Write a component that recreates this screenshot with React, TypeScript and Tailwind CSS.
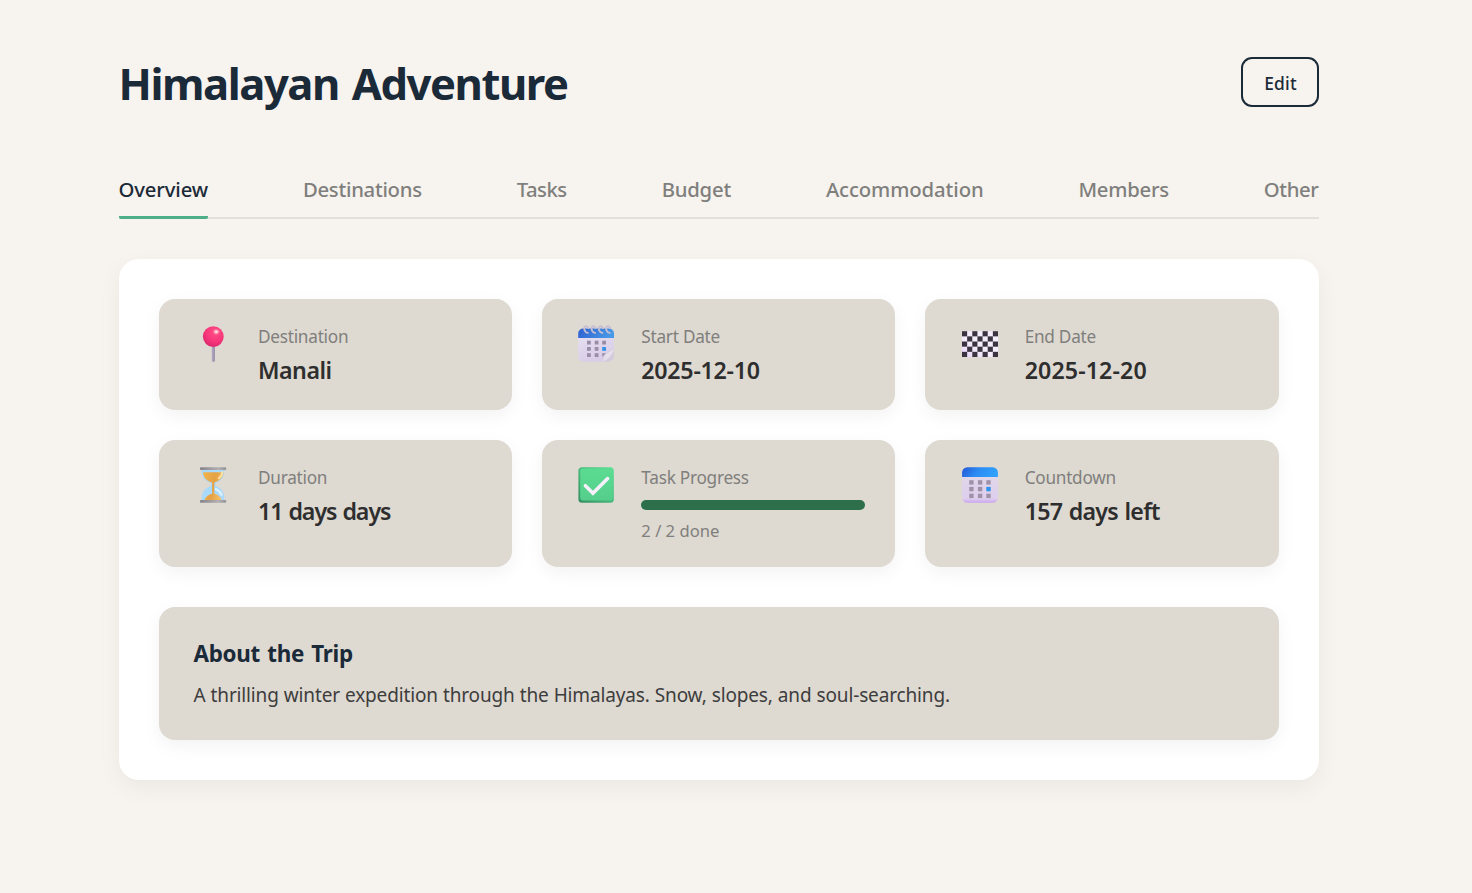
import type { ReactNode } from "react";

function PinIcon() {
  return (
    <svg className="size-9 shrink-0 overflow-visible" viewBox="0 0 36 36">
      <defs>
        <radialGradient id="pinBall" cx="0.6" cy="0.3" r="0.75">
          <stop offset="0" stopColor="#ff4d86" />
          <stop offset="0.55" stopColor="#f9387b" />
          <stop offset="1" stopColor="#d9246c" />
        </radialGradient>
        <linearGradient id="pinStick" x1="0" x2="1" y1="0" y2="0">
          <stop offset="0" stopColor="#b5adc6" />
          <stop offset="1" stopColor="#938aa5" />
        </linearGradient>
        <radialGradient id="pinShine">
          <stop offset="0" stopColor="#ffe9ea" />
          <stop offset="0.3" stopColor="#ffc9d3" />
          <stop offset="1" stopColor="#ff7d9c" stopOpacity="0" />
        </radialGradient>
      </defs>
      <rect x="16.8" y="19" width="3.1" height="16.8" rx="0.8" fill="url(#pinStick)" />
      <circle cx="18.3" cy="10.6" r="10.4" fill="url(#pinBall)" />
      <ellipse cx="21.3" cy="5.8" rx="4" ry="3.4" fill="url(#pinShine)" />
    </svg>
  );
}

function SpiralCalendarIcon() {
  return (
    <svg className="size-9 shrink-0 overflow-visible" viewBox="0 0 36 36">
      <defs>
        <linearGradient id="spiralTop" x1="0" x2="1" y1="0" y2="0.2">
          <stop offset="0" stopColor="#2f5fd0" />
          <stop offset="1" stopColor="#4799e6" />
        </linearGradient>
        <linearGradient id="spiralBody" x1="0" x2="0.5" y1="0" y2="1">
          <stop offset="0" stopColor="#e6dff0" />
          <stop offset="1" stopColor="#d8cce6" />
        </linearGradient>
      </defs>
      <path d="M0.2 10H36V24.5L25.5 35.8H5.5a5.3 5.3 0 0 1-5.3-5.3Z" fill="url(#spiralBody)" />
      <path d="M0.2 12V7.5A5 5 0 0 1 5.2 2.5H31a5 5 0 0 1 5 5V12Z" fill="url(#spiralTop)" />
      <g fill="#9a8da7">
        <rect x="9" y="14.7" width="3.8" height="3.8" />
        <rect x="16.7" y="14.7" width="3.8" height="3.8" />
        <rect x="24.2" y="14.7" width="3.8" height="3.8" />
        <rect x="9" y="21" width="3.8" height="3.8" />
        <rect x="16.7" y="21" width="3.8" height="3.8" />
        <rect x="9" y="27.2" width="3.8" height="3.8" />
        <rect x="16.7" y="27.2" width="3.8" height="3.8" />
        <path d="M24.2 27.2h3.8l-3.8 3.8z" />
      </g>
      <rect x="24.2" y="21" width="3.8" height="3.8" fill="#3493e6" />
      <path d="M36 22.5C32.5 26.3 29.5 26 27 28.2C25 30.6 26.4 33.5 24.2 35.8H30a6 6 0 0 0 6-6Z" fill="#d3cbdb" />
      <path d="M36 22.5C33 26 29.5 26.2 27.4 28.8C25.8 31 26.4 33.7 24.2 35.8C29 34.5 35 28.5 36 22.5Z" fill="#e6e0ea" />
      <g fill="none" stroke="#c6bfd3" strokeWidth="1.9" strokeLinecap="round">
        <path d="M9.8 6.9C6.8 6.7 5.2 2.5 6.8 0.7C8-0.3 9.4 0.2 10.4 2" />
        <path d="M17.1 6.9C14.1 6.7 12.5 2.5 14.1 0.7C15.3-0.3 16.7 0.2 17.7 2" />
        <path d="M24.4 6.9C21.4 6.7 19.8 2.5 21.4 0.7C22.6-0.3 24 0.2 25 2" />
        <path d="M31.7 6.9C28.7 6.7 27.1 2.5 28.7 0.7C29.9-0.3 31.3 0.2 32.3 2" />
      </g>
    </svg>
  );
}

function FlagIcon() {
  const cells = Array.from({ length: 35 }, (_, i) => i).filter((i) => i % 2 === 0);
  return (
    <svg className="size-9 shrink-0 overflow-visible" viewBox="0 0 36 36">
      <defs>
        <linearGradient id="flagLight" x1="0" x2="1" y1="1" y2="0">
          <stop offset="0" stopColor="#e9d6fa" />
          <stop offset="0.4" stopColor="#f4edfb" />
          <stop offset="1" stopColor="#f5eefb" />
        </linearGradient>
      </defs>
      <rect x="0" y="5.2" width="36" height="25.8" fill="url(#flagLight)" />
      {cells.map((i) => (
        <rect
          key={i}
          x={(i % 7) * 5.143}
          y={5.2 + Math.floor(i / 7) * 5.16}
          width="5.143"
          height="5.16"
          fill="#3b3440"
        />
      ))}
    </svg>
  );
}

function HourglassIcon() {
  return (
    <svg className="size-9 shrink-0 overflow-visible" viewBox="0 0 36 36">
      <defs>
        <linearGradient id="hgCap" x1="0" x2="1" y1="0" y2="0">
          <stop offset="0" stopColor="#85838a" />
          <stop offset="0.7" stopColor="#b1afb2" />
          <stop offset="1" stopColor="#939297" />
        </linearGradient>
        <linearGradient id="hgSand" x1="0" x2="1" y1="0" y2="0.3">
          <stop offset="0" stopColor="#f2b54d" />
          <stop offset="0.6" stopColor="#e5a146" />
          <stop offset="1" stopColor="#f5bd62" />
        </linearGradient>
      </defs>
      <path d="M6.7 2.5H29.3C29.6 10 26.2 13.7 20.6 16V19C26.5 21.2 29.7 25 29.3 33.5H6.7C6.3 25 9.5 21.2 15.9 19V16C9.8 13.7 6.4 10 6.7 2.5Z" fill="#a9d9fb" />
      <path d="M8 6.2Q8 5.2 9 5.2H27.5Q28.6 5.2 28.4 6.4C27.3 11.5 23.5 14.2 19.3 15.5V26.8C22 27.5 25.6 29.4 26.6 33H9.7C10.7 29.4 14.2 27.5 17.1 26.8V15.5C12.3 14.2 8.8 11 8 6.2Z" fill="url(#hgSand)" />
      <path d="M24 11.2Q27 9 27.3 5" fill="none" stroke="#ffe0a1" strokeWidth="2.1" strokeLinecap="round" />
      <path d="M20.9 22Q25 24 26.6 27.8" fill="none" stroke="#dcf2ff" strokeWidth="2.2" strokeLinecap="round" />
      <rect x="5" y="0.2" width="26.2" height="2.9" rx="0.8" fill="url(#hgCap)" />
      <rect x="5" y="33" width="26.2" height="2.8" rx="0.8" fill="url(#hgCap)" />
    </svg>
  );
}

function CheckIcon() {
  return (
    <svg className="size-9 shrink-0 overflow-visible" viewBox="0 0 36 36">
      <defs>
        <linearGradient id="checkEdge" x1="0" x2="1" y1="1" y2="0">
          <stop offset="0" stopColor="#358e62" />
          <stop offset="0.5" stopColor="#47b97c" />
          <stop offset="1" stopColor="#5be294" />
        </linearGradient>
        <linearGradient id="checkFace" x1="0" x2="0" y1="0" y2="1">
          <stop offset="0" stopColor="#5bdc92" />
          <stop offset="1" stopColor="#55ce8b" />
        </linearGradient>
      </defs>
      <rect x="0.4" y="0.2" width="35.4" height="35.6" rx="3.6" fill="url(#checkEdge)" />
      <rect x="2.2" y="1.4" width="32.6" height="32" rx="2.4" fill="url(#checkFace)" />
      <path d="M7.4 18.7L15 26.2L29.6 11.6" fill="none" stroke="#f7f0fb" strokeWidth="3.6" strokeLinecap="round" />
    </svg>
  );
}

function CalendarIcon() {
  return (
    <svg className="size-9 shrink-0 overflow-visible" viewBox="0 0 36 36">
      <defs>
        <linearGradient id="calTop" x1="0" x2="1" y1="0" y2="0.2">
          <stop offset="0" stopColor="#2457d5" />
          <stop offset="0.5" stopColor="#2b8cf3" />
          <stop offset="1" stopColor="#2fa0fb" />
        </linearGradient>
        <linearGradient id="calBody" x1="0" x2="0" y1="0" y2="1">
          <stop offset="0" stopColor="#e0d7e9" />
          <stop offset="0.85" stopColor="#ddceee" />
          <stop offset="1" stopColor="#c9a2f0" />
        </linearGradient>
      </defs>
      <path d="M0.1 9H35.9V30.5a5.3 5.3 0 0 1-5.3 5.3H5.4a5.3 5.3 0 0 1-5.3-5.3Z" fill="url(#calBody)" />
      <path d="M0.1 10V5.5A5.3 5.3 0 0 1 5.4 0.2H30.6a5.3 5.3 0 0 1 5.3 5.3V10Z" fill="url(#calTop)" />
      <g fill="#9f92a8">
        <rect x="7.2" y="13.2" width="4.4" height="4.4" />
        <rect x="15.9" y="13.2" width="4.4" height="4.4" />
        <rect x="24.3" y="13.2" width="4.4" height="4.4" />
        <rect x="7.2" y="19.9" width="4.4" height="4.4" />
        <rect x="15.9" y="19.9" width="4.4" height="4.4" />
        <rect x="7.2" y="26.7" width="4.4" height="4.4" />
        <rect x="15.9" y="26.7" width="4.4" height="4.4" />
        <rect x="24.3" y="26.7" width="4.4" height="4.4" />
      </g>
      <rect x="24.3" y="19.9" width="4.4" height="4.4" fill="#2e93ec" />
    </svg>
  );
}

const tabs = [
  { name: "Overview", style: "tracking-[-0.14px]" },
  { name: "Destinations", style: "tracking-[-0.27px]" },
  { name: "Tasks", style: "tracking-[-0.5px]" },
  { name: "Budget", style: "tracking-[-0.2px]" },
  { name: "Accommodation", style: "tracking-[-0.1px]" },
  { name: "Members", style: "tracking-[-0.25px]" },
  { name: "Other", style: "tracking-[-0.4px]" },
];

function InfoCard({ icon, label, children }: { icon: ReactNode; label: string; children: ReactNode }) {
  return (
    <div className="flex items-start gap-[27px] rounded-2xl bg-[#ded9d1] pt-[26px] pr-[30px] pb-6 pl-[36.5px] shadow-[0_6px_18px_rgba(0,0,0,0.05)]">
      <div className="pt-px">{icon}</div>
      <div className="min-w-0 flex-1">
        <div className="text-[17.2px] leading-6 tracking-[-0.25px] text-[#7f7f7d]">{label}</div>
        {children}
      </div>
    </div>
  );
}

function Value({ children, className }: { children: ReactNode; className: string }) {
  return (
    <div className={"mt-[5px] text-[23.2px] leading-8 font-semibold whitespace-nowrap text-[#2e2e2e] " + className}>
      {children}
    </div>
  );
}

export default function App() {
  return (
    <div className="min-h-screen bg-[#f7f3ee] pt-[53px] pl-[118.5px] font-['Noto_Sans','Open_Sans',sans-serif]">
      <div className="w-[1200px]">
        <header className="flex items-start justify-between">
          <h1 className="text-[43.6px] leading-[60px] font-bold tracking-[-1.45px] [word-spacing:3px] text-[#1b2a38]">Himalayan Adventure</h1>
          <button className="mt-1 h-[50px] w-[78px] rounded-[11px] border-2 border-[#1b2a38] pt-[2.5px] pl-0.5 text-[17.4px] leading-6 font-medium tracking-[0.2px] text-[#1b2a38]">
            Edit
          </button>
        </header>

        <nav className="mt-[62px] flex h-11 justify-between border-b-2 border-[#e3dfda]">
          {tabs.map((tab, i) => (
            <div
              key={tab.name}
              className={
                i === 0
                  ? "h-11 border-b-3 border-[#4caf87] text-[20.3px] leading-7 font-medium text-[#1b2a38] rounded-b-[2px] " + tab.style
                  : "h-11 text-[20.3px] leading-7 font-medium text-[#7f7f7d] " + tab.style
              }
            >
              {tab.name}
            </div>
          ))}
        </nav>

        <main className="mt-10 rounded-[20px] bg-white p-10 shadow-[0_8px_24px_rgba(0,0,0,0.05)]">
          <div className="grid grid-cols-3 gap-[30px]">
            <InfoCard icon={<PinIcon />} label="Destination">
              <Value className="tracking-[-0.5px]">Manali</Value>
            </InfoCard>
            <InfoCard icon={<SpiralCalendarIcon />} label="Start Date">
              <Value className="tracking-[-0.25px]">2025-12-10</Value>
            </InfoCard>
            <InfoCard icon={<FlagIcon />} label="End Date">
              <Value className="tracking-[0.12px]">2025-12-20</Value>
            </InfoCard>
            <InfoCard icon={<HourglassIcon />} label="Duration">
              <Value className="tracking-[-1.05px] [word-spacing:1px]">11 days days</Value>
            </InfoCard>
            <InfoCard icon={<CheckIcon />} label="Task Progress">
              <div className="mt-2.5 h-2.5 rounded-full bg-[#2d6f4b]" />
              <div className="mt-[9px] text-[16.6px] leading-6 text-[#7f7f7d]">2 / 2 done</div>
            </InfoCard>
            <InfoCard icon={<CalendarIcon />} label="Countdown">
              <Value className="tracking-[-0.7px] [word-spacing:1px]">157 days left</Value>
            </InfoCard>
          </div>

          <section className="mt-10 rounded-2xl bg-[#ded9d1] px-[35px] pt-8 pb-[31px] shadow-[0_6px_18px_rgba(0,0,0,0.05)]">
            <h2 className="text-[22.4px] leading-[30px] font-bold tracking-[-0.3px] [word-spacing:1.8px] text-[#1b2a38]">About the Trip</h2>
            <p className="mt-3 text-[19px] leading-7 tracking-[-0.15px] [word-spacing:0.3px] text-[#3d3d3d]">
              A thrilling winter expedition through the Himalayas. Snow, slopes, and soul-searching.
            </p>
          </section>
        </main>
      </div>
    </div>
  );
}
